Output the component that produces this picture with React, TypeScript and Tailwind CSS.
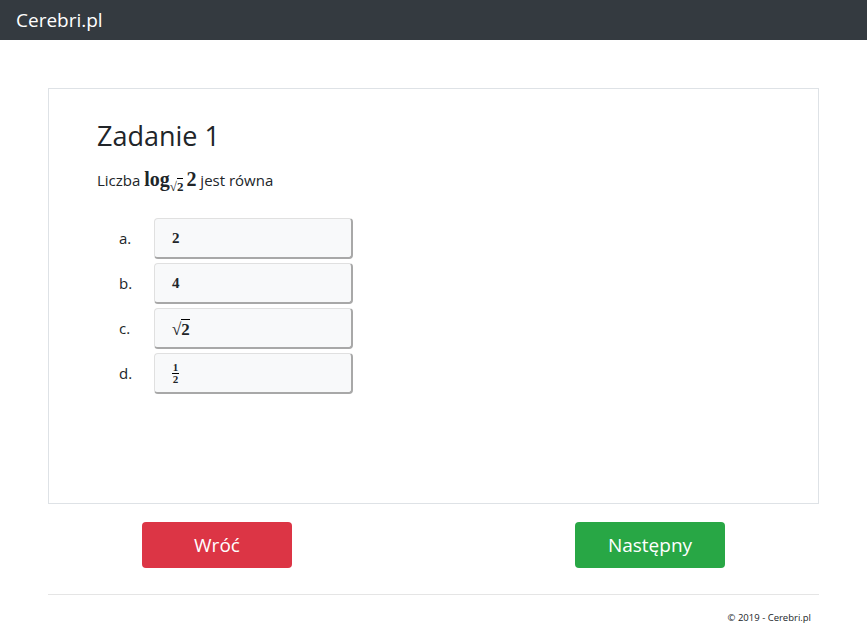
import React from "react";

const sans = { fontFamily: '"Open Sans", "Noto Sans", sans-serif' };
const serif = { fontFamily: '"Liberation Serif", "DejaVu Serif", serif' };

function Opt({ label, children }: { label: string; children: React.ReactNode }) {
  return (
    <div className="flex items-center h-[45px]">
      <div className="w-[57px] pl-[22px] text-[15px] text-[#212529]">{label}</div>
      <div className="w-[199px] h-[41px] flex items-center pl-[17px] bg-[#f8f9fa] rounded-[4px] border-t border-l border-r-2 border-b-2 border-t-[#e0e0e0] border-l-[#e0e0e0] border-r-[#a8a8a8] border-b-[#a8a8a8]">
        {children}
      </div>
    </div>
  );
}

const Sqrt2 = ({ size = 15 }: { size?: number }) => (
  <span className="inline-flex items-end font-bold" style={{ ...serif, fontSize: size }}>
    <span className="leading-none">√</span>
    <span className="leading-none border-t border-black pt-[1px]">2</span>
  </span>
);

export default function App() {
  return (
    <div className="min-h-[641px] bg-white text-[#212529]" style={sans}>
      <div className="h-10 bg-[#343a40] flex items-center pl-4">
        <span className="text-white text-[19px] leading-none">Cerebri.pl</span>
      </div>
      <div className="px-12 pt-12">
        <div className="h-[416px] border border-[#dee2e6] pl-12 pt-[29px]">
          <h1 className="text-[27px] leading-[36px] text-[#212529]">Zadanie 1</h1>
          <p className="mt-[10px] text-[15px] flex items-baseline">
            <span>Liczba&nbsp;</span>
            <span className="font-bold text-[20px]" style={serif}>log</span>
            <span className="relative top-[5px] mr-[3px]"><Sqrt2 size={13} /></span>
            <span className="font-bold text-[20px]" style={serif}>2</span>
            <span>&nbsp;jest równa</span>
          </p>
          <div className="mt-[22px] flex flex-col">
            <Opt label="a."><span className="font-bold text-[15px]" style={serif}>2</span></Opt>
            <Opt label="b."><span className="font-bold text-[15px]" style={serif}>4</span></Opt>
            <Opt label="c."><Sqrt2 size={17} /></Opt>
            <Opt label="d.">
              <span className="inline-flex flex-col items-center font-bold text-[11px] leading-[11px]" style={serif}>
                <span>1</span>
                <span className="border-t border-black w-[7px] text-center">2</span>
              </span>
            </Opt>
          </div>
        </div>
        <div className="flex mt-[18px] pl-[94px]">
          <button className="w-[150px] h-[46px] rounded-[4px] bg-[#dc3545] text-white text-[19px]">Wróć</button>
          <button className="ml-[283px] w-[150px] h-[46px] rounded-[4px] bg-[#28a745] text-white text-[19px]">Następny</button>
        </div>
        <div className="mt-[26px] border-t border-[#e5e5e5] flex justify-end pr-2 pt-[16px]">
          <span className="text-[9.5px]">© 2019 - Cerebri.pl</span>
        </div>
      </div>
    </div>
  );
}
